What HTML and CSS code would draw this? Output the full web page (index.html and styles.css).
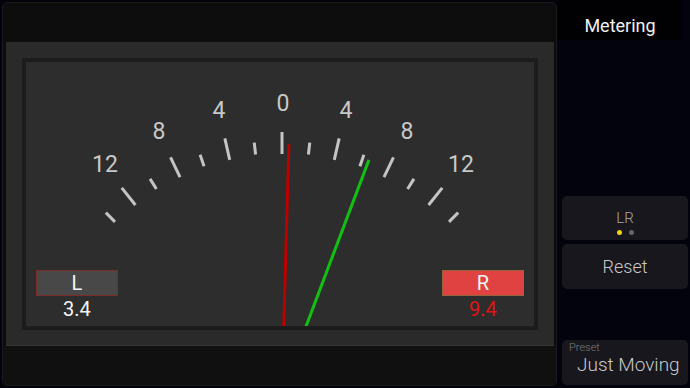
FILE: index.html
```html
<!DOCTYPE html>
<html>
	<head>
		<meta charset="UTF-8" />
		<title>Metering</title>
		<link rel="stylesheet" href="styles.css">
	</head>
	<body>
		<div id="meter-panel">
			<div class="panel-top"></div>
			<div class="meter-frame">
				<div class="meter-face">
					<svg class="dial" width="508" height="264" viewBox="0 0 508 264">
						<g class="ticks">
							<line class="major" x1="256" y1="92" x2="256" y2="70" />
							<line x1="256" y1="91" x2="256" y2="79" transform="rotate(-6.4 256 328)" />
							<line class="major" x1="256" y1="92" x2="256" y2="70" transform="rotate(-12.8 256 328)" />
							<line x1="256" y1="91" x2="256" y2="79" transform="rotate(-19.2 256 328)" />
							<line class="major" x1="256" y1="92" x2="256" y2="70" transform="rotate(-25.6 256 328)" />
							<line x1="256" y1="91" x2="256" y2="79" transform="rotate(-32 256 328)" />
							<line class="major" x1="256" y1="92" x2="256" y2="70" transform="rotate(-38.4 256 328)" />
							<line x1="256" y1="91" x2="256" y2="78" transform="rotate(-44.8 256 328)" />
							<line x1="256" y1="91" x2="256" y2="79" transform="rotate(6.4 256 328)" />
							<line class="major" x1="256" y1="92" x2="256" y2="70" transform="rotate(12.8 256 328)" />
							<line x1="256" y1="91" x2="256" y2="79" transform="rotate(19.2 256 328)" />
							<line class="major" x1="256" y1="92" x2="256" y2="70" transform="rotate(25.6 256 328)" />
							<line x1="256" y1="91" x2="256" y2="79" transform="rotate(32 256 328)" />
							<line class="major" x1="256" y1="92" x2="256" y2="70" transform="rotate(38.4 256 328)" />
							<line x1="256" y1="91" x2="256" y2="78" transform="rotate(44.8 256 328)" />
						</g>
						<g class="scale">
							<text x="257" y="49">0</text>
							<text x="193" y="56">4</text>
							<text x="320" y="56">4</text>
							<text x="133" y="77">8</text>
							<text x="381" y="77">8</text>
							<text x="79" y="110">12</text>
							<text x="435" y="110">12</text>
						</g>
						<line class="needle needle-left" x1="256" y1="328" x2="256" y2="82" transform="rotate(1.6 256 328)" />
						<line class="needle needle-right" x1="256" y1="328" x2="256" y2="82" transform="rotate(20.7 256 328)" />
					</svg>
					<div class="channels">
						<div class="channel">
							<div class="channel-tag">L</div>
							<div class="channel-value">3.4</div>
						</div>
						<div class="channel channel-hot">
							<div class="channel-tag">R</div>
							<div class="channel-value">9.4</div>
						</div>
					</div>
				</div>
			</div>
			<div class="panel-bottom"></div>
		</div>
		<div id="side-column">
			<div class="side-title">Metering</div>
			<div class="side-button mode-button">
				<span class="button-text">LR</span>
				<div class="dots">
					<span class="dot active"></span>
					<span class="dot"></span>
				</div>
			</div>
			<div class="side-button reset-button">
				<span class="button-text">Reset</span>
			</div>
			<div class="side-button preset-button">
				<span class="preset-label">Preset</span>
				<span class="preset-name">Just Moving</span>
			</div>
		</div>
	</body>
</html>
```

FILE: styles.css
```css
body {
	margin: 0;
	width: 690px;
	height: 388px;
	overflow: hidden;
	display: flex;
	background-color: #03030e;
	font-family: Roboto, 'Noto Sans', sans-serif;
}
#meter-panel {
	width: 553px;
	margin: 2px 1px 2px 2px;
	border: 1px solid #1a1a1a;
	border-radius: 5px;
	background-color: #0d0d0d;
	display: flex;
	flex-direction: column;
	overflow: hidden;
}
.panel-top {
	height: 39px;
}
.meter-frame {
	margin: 0 2px 0 3px;
	padding: 16px;
	background-color: #2a2a2a;
	border-bottom: 1px solid #363636;
	height: 271px;
}
.meter-face {
	position: relative;
	height: 264px;
	border: 4px solid #1c1c1c;
	background-color: #2d2d2d;
	display: flex;
	flex-direction: column;
	justify-content: flex-end;
}
.panel-bottom {
	flex: 1;
	background-color: #101010;
}
.dial {
	position: absolute;
	top: 0;
	left: 0;
	overflow: hidden;
}
.ticks line {
	stroke: #c4c4c4;
	stroke-width: 3;
}
.scale text {
	fill: #c8c8c8;
	font-size: 23px;
	text-anchor: middle;
}
.needle {
	stroke-width: 3;
}
.needle-left {
	stroke: #bb0000;
}
.needle-right {
	stroke: #12c012;
}
.channels {
	position: relative;
	display: flex;
	justify-content: space-between;
	padding: 0 10px 4px 10px;
}
.channel {
	width: 82px;
	display: flex;
	flex-direction: column;
	align-items: center;
}
.channel-tag {
	box-sizing: border-box;
	width: 82px;
	height: 26px;
	line-height: 24px;
	text-align: center;
	font-size: 20px;
	color: #f4f4f4;
	background-color: #484848;
	border: 1px solid #7c2a2a;
}
.channel-value {
	font-size: 20px;
	line-height: 26px;
	color: #f4f4f4;
}
.channel-hot .channel-tag {
	background-color: #e04141;
	border-color: #94643a;
}
.channel-hot .channel-value {
	color: #e01414;
}
#side-column {
	flex: 1;
	display: flex;
	flex-direction: column;
	padding: 0 2px 3px 4px;
}
.side-title {
	margin-left: -4px;
	margin-right: 6px;
	height: 40px;
	padding-top: 6px;
	box-sizing: border-box;
	line-height: 40px;
	text-align: center;
	font-size: 18px;
	color: #f2f2f2;
	background-color: #010103;
}
.side-button {
	border-radius: 5px;
	background-color: #17171d;
	color: #c8c8c8;
	font-weight: 300;
	display: flex;
	flex-direction: column;
	align-items: center;
	white-space: nowrap;
}
.mode-button {
	margin-top: auto;
	height: 44px;
	box-sizing: border-box;
	padding-top: 13px;
}
.mode-button .button-text {
	font-size: 15px;
	line-height: 18px;
	color: #a8a8a8;
}
.dots {
	display: flex;
	gap: 7px;
	margin-top: 3px;
}
.dot {
	width: 5px;
	height: 5px;
	border-radius: 50%;
	background-color: #666;
}
.dot.active {
	background-color: #f2d20a;
}
.reset-button {
	margin-top: 4px;
	height: 45px;
	justify-content: center;
	font-size: 18px;
}
.preset-button {
	margin-top: 51px;
	height: 45px;
	box-sizing: border-box;
	padding: 2px 4px 0 7px;
	align-items: flex-start;
}
.preset-label {
	font-size: 11px;
	line-height: 12px;
	color: #7c7c7c;
}
.preset-name {
	margin-left: 8px;
	font-size: 19px;
	line-height: 22px;
	color: #cacaca;
}
```
